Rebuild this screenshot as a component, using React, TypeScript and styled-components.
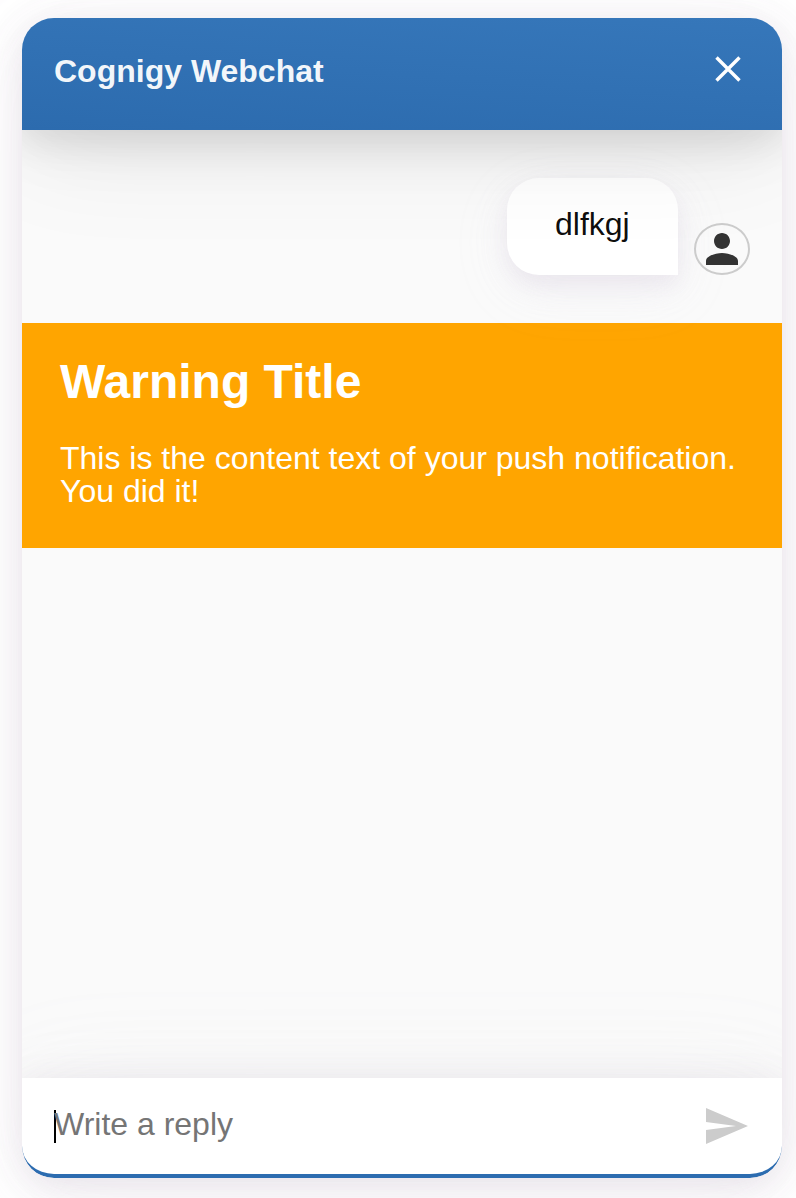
import React from "react";
import styled, { createGlobalStyle } from "styled-components";

const GlobalStyle = createGlobalStyle`
  *, *::before, *::after { box-sizing: border-box; }
  body {
    margin: 0;
    background: #fff;
    font-family: Helvetica, "Liberation Sans", Arial, sans-serif;
    font-size: 32px;
    overflow: hidden;
  }
`;

const Page = styled.main`
  height: 1198px;
  padding: 18px 14px 20px 22px;
  overflow: hidden;
`;

const ChatWindow = styled.section`
  height: 1160px;
  display: flex;
  flex-direction: column;
  border-radius: 32px;
  background: #fafafa;
  overflow: hidden;
  box-shadow:
    0 8px 36px 0 rgba(151, 124, 156, 0.17),
    0 8px 60px 0 rgba(190, 180, 198, 0.12),
    0 16px 100px 0 rgba(216, 212, 221, 0.06);
`;

const Header = styled.header`
  height: 112px;
  flex: none;
  display: flex;
  align-items: center;
  justify-content: space-between;
  padding: 0 32px;
  z-index: 2;
  color: rgba(255, 255, 255, 0.95);
  background: linear-gradient(4deg, #2c6bae 0%, #3677ba 100%);
  box-shadow:
    0 10px 36px 0 rgba(0, 0, 0, 0.08),
    0 10px 64px 0 rgba(0, 0, 0, 0.08),
    0 16px 116px 0 rgba(0, 0, 0, 0.08);
`;

const HeaderTitle = styled.h1`
  margin: 0;
  padding-bottom: 6px;
  font-size: 32px;
  line-height: 40px;
  font-weight: 700;
  white-space: nowrap;
`;

const IconButton = styled.button<{ $lift?: number }>`
  display: flex;
  border: 0;
  padding: 0;
  margin-bottom: ${(p) => p.$lift ?? 0}px;
  background: none;
  color: inherit;
`;

const History = styled.div`
  flex: 1;
  padding-top: 48px;
`;

const MessageRow = styled.div`
  display: flex;
  justify-content: flex-end;
  align-items: flex-end;
  gap: 16px;
  padding: 0 32px;
  margin-bottom: 48px;
`;

const Bubble = styled.div`
  height: 97px;
  width: 171px;
  padding: 28px 0 0 48px;
  line-height: 37px;
  color: rgba(0, 0, 0, 0.95);
  background: #fff;
  border-radius: 32px 32px 0 32px;
  box-shadow:
    0 10px 18px 0 rgba(151, 124, 156, 0.05),
    0 10px 32px 0 rgba(203, 195, 222, 0.2),
    0 16px 58px 0 rgba(216, 212, 221, 0.1);
`;

const Avatar = styled.div`
  width: 56px;
  height: 52px;
  display: flex;
  align-items: center;
  justify-content: center;
  border: 2px solid #ccc;
  border-radius: 50%;
  color: #333;
`;

const Notification = styled.article`
  height: 225px;
  padding: 31px 38px 0;
  background: #ffa500;
  color: #fff;
`;

const NotificationTitle = styled.h2`
  margin: 0 0 33px;
  font-size: 48px;
  line-height: 55px;
  font-weight: 700;
`;

const NotificationText = styled.p`
  margin: 0;
  line-height: 33px;
  white-space: nowrap;
`;

const Composer = styled.footer`
  height: 100px;
  flex: none;
  display: flex;
  align-items: center;
  justify-content: space-between;
  padding: 0 32px;
  z-index: 1;
  color: #ccc;
  background: #fff;
  border-bottom: 4px solid #2c6cb0;
  border-radius: 0 0 32px 32px;
  box-shadow:
    0 8px 36px 0 rgba(151, 124, 156, 0.14),
    0 10px 64px 0 rgba(190, 186, 196, 0.14),
    0 16px 116px 0 rgba(206, 204, 210, 0.12);
`;

const ReplyField = styled.div`
  display: flex;
  align-items: center;
  color: #757575;
  white-space: nowrap;
  line-height: 37px;
  padding-top: 1px;
`;

const Caret = styled.span`
  width: 2px;
  height: 33px;
  margin-right: -2px;
  background: #000;
`;

const Placeholder = styled.span`
  padding-bottom: 4px;
`;

export default function App() {
  return (
    <>
      <GlobalStyle />
      <Page>
        <ChatWindow>
          <Header>
            <HeaderTitle>Cognigy Webchat</HeaderTitle>
            <IconButton aria-label="Close" $lift={10}>
              <svg width="44" height="28" viewBox="0 0 44 28" fill="none">
                <path d="M10 2.5 33 25.5M33 2.5 10 25.5" transform="translate(.5)" stroke="#fff" strokeWidth="3.4" />
              </svg>
            </IconButton>
          </Header>
          <History>
            <MessageRow>
              <Bubble>dlfkgj</Bubble>
              <Avatar>
                <svg width="48" height="48" viewBox="0 0 24 24" fill="currentColor">
                  <path d="M12 12c2.21 0 4-1.79 4-4s-1.79-4-4-4-4 1.79-4 4 1.79 4 4 4zm0 2c-2.67 0-8 1.34-8 4v2h16v-2c0-2.66-5.33-4-8-4z" />
                </svg>
              </Avatar>
            </MessageRow>
            <Notification>
              <NotificationTitle>Warning Title</NotificationTitle>
              <NotificationText>
                This is the content text of your push notification.
                <br />
                You did it!
              </NotificationText>
            </Notification>
          </History>
          <Composer>
            <ReplyField>
              <Caret />
              <Placeholder>Write a reply</Placeholder>
            </ReplyField>
            <IconButton aria-label="Send">
              <svg width="48" height="48" viewBox="0 0 24 24" fill="currentColor">
                <path d="M2.01 21L23 12 2.01 3 2 10l15 2-15 2z" />
              </svg>
            </IconButton>
          </Composer>
        </ChatWindow>
      </Page>
    </>
  );
}
